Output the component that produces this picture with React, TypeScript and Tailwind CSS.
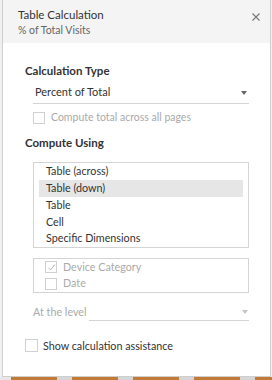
import React from "react";

function Check({ checked, className = "" }: { checked?: boolean; className?: string }) {
  return (
    <div className={"w-[12px] h-[12px] border border-[#d0d0d0] bg-white flex items-center justify-center shrink-0 " + className}>
      {checked && (
        <svg width="9" height="9" viewBox="0 0 9 9">
          <path d="M1.5 4.8 L3.6 7 L7.6 1.8" fill="none" stroke="#b8b8b8" strokeWidth="1" />
        </svg>
      )}
    </div>
  );
}

function Arrow({ color = "#666" }: { color?: string }) {
  return (
    <svg width="6" height="4" viewBox="0 0 6 4">
      <path d="M0 0 H6 L3 4 Z" fill={color} />
    </svg>
  );
}

export default function App() {
  const items = ["Table (across)", "Table (down)", "Table", "Cell", "Specific Dimensions"];
  return (
    <div className="w-[272px] h-[380px] bg-[#f0f0f0] flex flex-col overflow-hidden" style={{ fontFamily: "Lato, 'Liberation Sans', sans-serif" }}>
      <div className="flex-1 ml-[2px] mr-[1px] border-x border-b border-[#cfcfcf] bg-white flex flex-col">
        <div className="h-[43px] bg-[#f4f4f4] flex justify-between pl-[15px] pr-[10px] pt-[7px]">
          <div className="flex flex-col">
            <div className="text-[11.5px] leading-[16px] text-[#333]">Table Calculation</div>
            <div className="text-[10.5px] leading-[14px] text-[#666]">% of Total Visits</div>
          </div>
          <svg width="8" height="8" viewBox="0 0 8 8" className="mt-[6px]">
            <path d="M0.5 0.5 L7.5 7.5 M7.5 0.5 L0.5 7.5" stroke="#777" strokeWidth="1.1" />
          </svg>
        </div>
        <div className="pl-[22px] pr-[21px] flex flex-col">
          <div className="mt-[20px] text-[11.5px] leading-[16px] font-bold text-[#333]">Calculation Type</div>
          <div className="ml-[8px] mt-[3px] h-[22px] border-b border-[#d4d4d4] flex items-center justify-between pl-[2px] pr-[2px]">
            <span className="text-[11px] text-[#333]">Percent of Total</span>
            <Arrow />
          </div>
          <div className="ml-[8px] mt-[8px] flex items-center gap-[6px] h-[12px]">
            <Check />
            <span className="text-[10.5px] text-[#aaa] whitespace-nowrap">Compute total across all pages</span>
          </div>
          <div className="mt-[11px] text-[11.5px] leading-[16px] font-bold text-[#333]">Compute Using</div>
          <div className="ml-[8px] mt-[11px] border border-[#d4d4d4] px-[5px] flex flex-col">
            {items.map((t, i) => (
              <div key={t} className={"h-[16.75px] flex items-center pl-[7px] text-[10.75px] text-[#333] " + (i === 1 ? "bg-[#e6e6e6]" : "")}>
                {t}
              </div>
            ))}
          </div>
          <div className="ml-[8px] mt-[10px] border border-[#d4d4d4] pl-[11px] flex flex-col">
            <div className="h-[16.5px] flex items-center gap-[6px]">
              <Check checked />
              <span className="text-[10.75px] text-[#aaa]">Device Category</span>
            </div>
            <div className="h-[16.5px] flex items-center gap-[6px]">
              <Check />
              <span className="text-[10.75px] text-[#aaa]">Date</span>
            </div>
          </div>
          <div className="ml-[8px] mt-[11px] flex items-end">
            <span className="text-[10.75px] text-[#aaa] w-[56px] shrink-0 whitespace-nowrap h-[17px] flex items-center">At the level</span>
            <div className="flex-1 h-[17px] border-b border-[#d4d4d4] flex items-center justify-end pr-[1px]">
              <Arrow color="#c4c4c4" />
            </div>
          </div>
          <div className="mt-[17px] flex items-center gap-[5px]">
            <Check className="w-[13px] h-[13px]" />
            <span className="text-[10.75px] text-[#333] whitespace-nowrap">Show calculation assistance</span>
          </div>
        </div>
      </div>
      <div className="h-[3px] flex">
        <div className="w-[11px] bg-[#e8e8e8]" />
        {[0, 1, 2, 3].map((i) => (
          <React.Fragment key={i}>
            <div className="w-[46px] bg-[#c27b34]" />
            <div className="w-[15px] bg-[#d6d6d6]" />
          </React.Fragment>
        ))}
        <div className="flex-1 bg-[#c27b34]" />
      </div>
    </div>
  );
}
